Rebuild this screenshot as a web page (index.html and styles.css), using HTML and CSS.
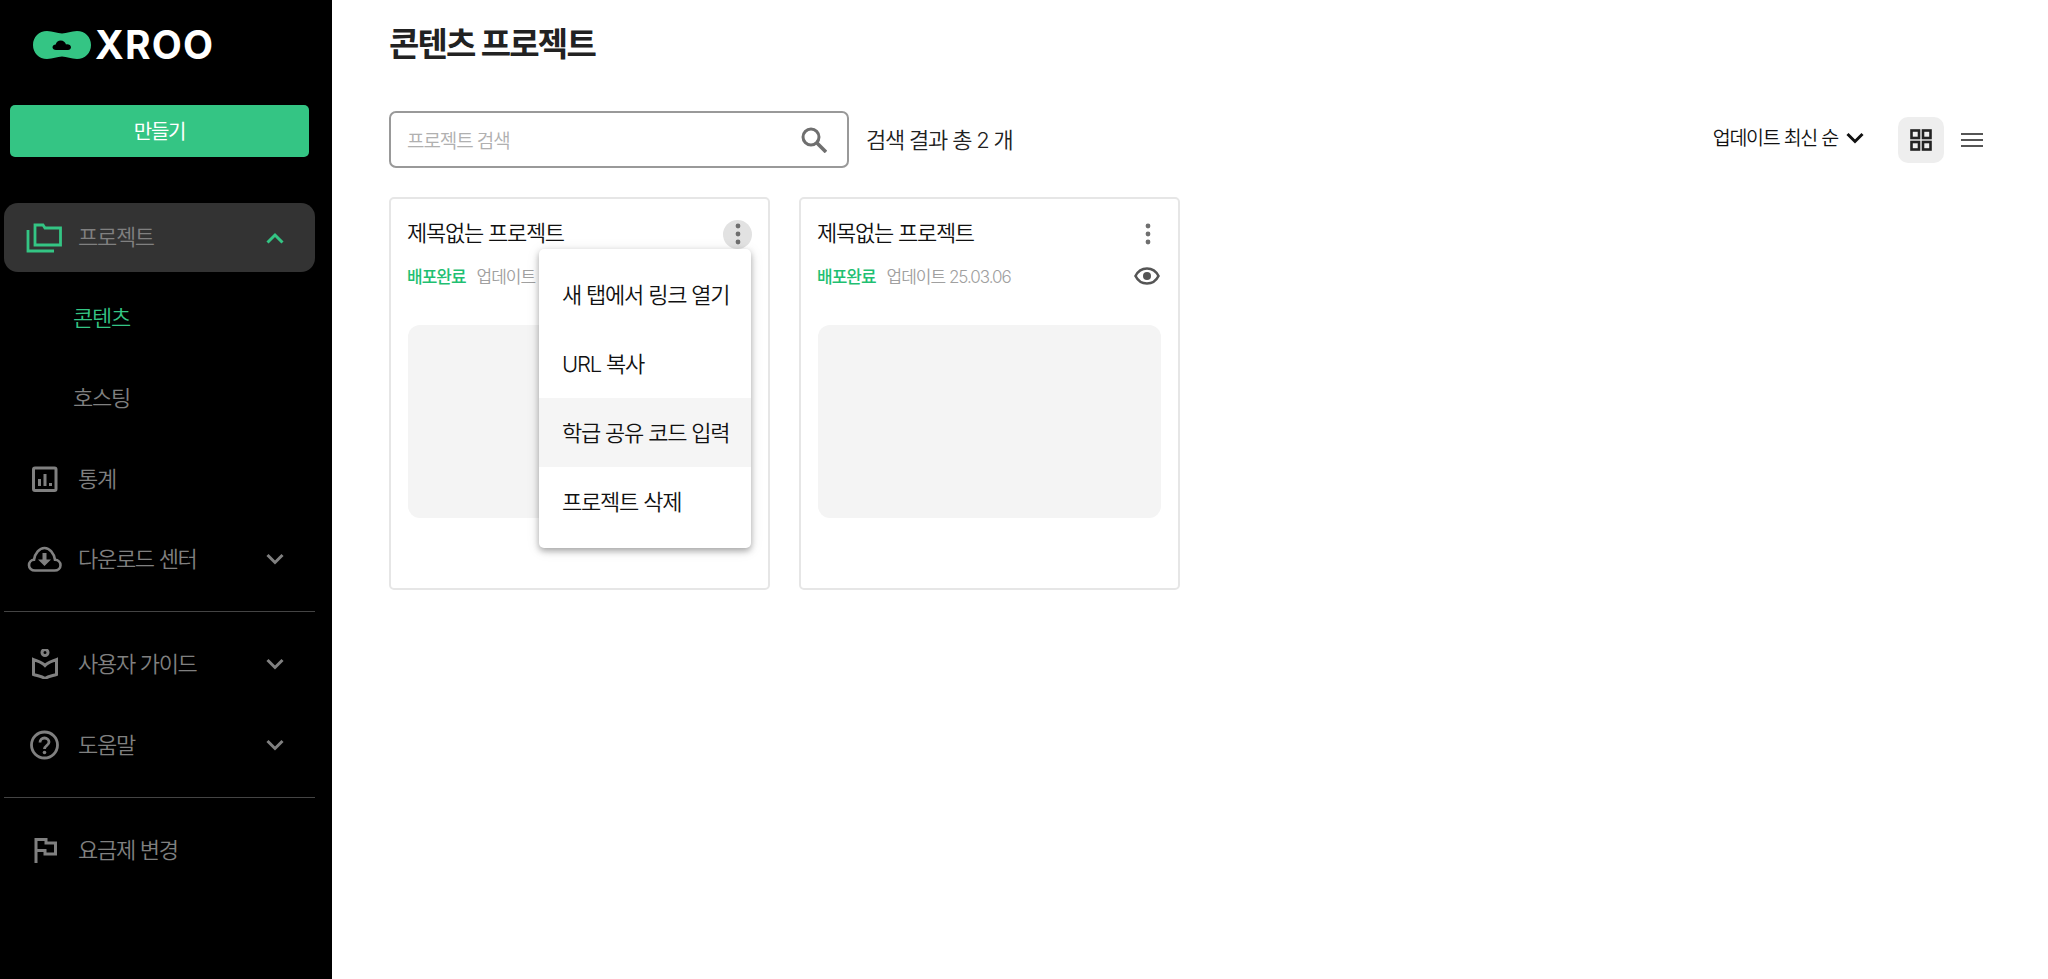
FILE: index.html
```html
<!DOCTYPE html>
<html lang="ko">
<head>
<meta charset="utf-8">
<title>XROO</title>
<link rel="stylesheet" href="styles.css">
</head>
<body>
<div class="app">
  <aside class="sidebar">
    <div class="brand">
      <svg class="brand-mark" viewBox="0 0 58 28" aria-hidden="true">
        <path fill="#34c584" d="M14 0C20 0 24 2.500 29 2.500S38 0 44 0c8 0 14 6 14 14s-6 14-14 14c-6 0-10-2.500-15-2.500S20 28 14 28C6 28 0 22 0 14S6 0 14 0Z"/>
        <path fill="#000" d="M23 19c-2 0-3.500-1.200-3.500-2.800s1.500-2.800 3.200-2.800c.6-2.200 2.600-3.900 5-3.900 2.700 0 4.800 1.700 5.300 4 2.300-.6 5 .7 5 2.800 0 1.600-1.400 2.700-3 2.700Z"/>
      </svg>
      <span class="brand-name">XROO</span>
    </div>
    <button class="create">만들기</button>
    <nav class="nav">
      <div class="nav-row active">
        <svg class="nav-icon" viewBox="0 0 36 30" aria-hidden="true"><g fill="none" stroke="#34c584" stroke-width="2.800"><path d="M9 5V2h8l2 3h15.500v17H9Z"/><path d="M2 7v21h26"/></g></svg>
        <span class="nav-label">프로젝트</span>
        <svg class="chev" viewBox="0 0 18 12" aria-hidden="true"><path d="M1.500 10.500L9 3l7.500 7.500" fill="none" stroke="#34c584" stroke-width="3"/></svg>
      </div>
      <div class="nav-sub current"><span>콘텐츠</span></div>
      <div class="nav-sub"><span>호스팅</span></div>
      <div class="nav-row">
        <svg class="nav-icon" viewBox="0 0 36 30" aria-hidden="true"><g fill="none" stroke="#808080" stroke-width="3"><rect x="7.500" y="4" width="22.500" height="22.500" rx="1.500"/><path d="M13.500 22v-7M19 22V10M24.500 22v-3"/></g></svg>
        <span class="nav-label">통계</span>
      </div>
      <div class="nav-row">
        <svg class="nav-icon" viewBox="0 0 36 30" aria-hidden="true"><path fill="none" stroke="#808080" stroke-width="2.600" d="M9 26.500c-3.500 0-6-2.300-6-5.300 0-3 2.300-5.200 5-5.400C9 9 13.500 4 18.500 4s9.500 5 10.500 11.800c3 .2 5.500 2.400 5.500 5.400 0 3-2.500 5.300-6 5.300Z"/><path fill="#808080" d="M16.500 9h4v6.500h4.500l-6.500 6.500-6.500-6.500h4.500Z"/></svg>
        <span class="nav-label">다운로드 센터</span>
        <svg class="chev" viewBox="0 0 18 12" aria-hidden="true"><path d="M1.500 2l7.500 7.500L16.500 2" fill="none" stroke="#808080" stroke-width="3"/></svg>
      </div>
      <hr class="nav-rule">
      <div class="nav-row">
        <svg class="nav-icon" viewBox="0 0 36 30" aria-hidden="true"><g fill="none" stroke="#808080" stroke-width="3"><circle cx="19" cy="3.500" r="3"/><path d="M7.500 10.500c4.500 2 9 3 11.500 6 2.500-3 7-4 11.500-6v15c-5 1.500-8.500 2-11.500 4-3-2-6.500-2.500-11.500-4Z"/></g></svg>
        <span class="nav-label">사용자 가이드</span>
        <svg class="chev" viewBox="0 0 18 12" aria-hidden="true"><path d="M1.500 2l7.500 7.500L16.500 2" fill="none" stroke="#808080" stroke-width="3"/></svg>
      </div>
      <div class="nav-row">
        <svg class="nav-icon" viewBox="0 0 36 30" aria-hidden="true"><circle cx="18.500" cy="15" r="13" fill="none" stroke="#808080" stroke-width="2.800"/><path d="M14 12.500c0-2.500 2-4.500 4.500-4.500s4.500 1.800 4.500 4c0 3.500-4.500 3.500-4.500 7" fill="none" stroke="#808080" stroke-width="2.800"/><circle cx="18.500" cy="22.500" r="1.800" fill="#808080"/></svg>
        <span class="nav-label">도움말</span>
        <svg class="chev" viewBox="0 0 18 12" aria-hidden="true"><path d="M1.500 2l7.500 7.500L16.500 2" fill="none" stroke="#808080" stroke-width="3"/></svg>
      </div>
      <hr class="nav-rule">
      <div class="nav-row">
        <svg class="nav-icon" viewBox="0 0 36 30" aria-hidden="true"><path fill="none" stroke="#808080" stroke-width="3" d="M10 28V4.500h10V8h9.500v11H19v-3.500h-9"/></svg>
        <span class="nav-label">요금제 변경</span>
      </div>
    </nav>
  </aside>
  <main class="main">
    <h1 class="title">콘텐츠 프로젝트</h1>
    <div class="toolbar">
      <div class="search">
        <span class="placeholder">프로젝트 검색</span>
        <svg class="search-icon" viewBox="0 0 26 26" aria-hidden="true"><circle cx="10" cy="10" r="8" fill="none" stroke="#6f6f6f" stroke-width="3"/><path d="M15.500 15.500L25 25" stroke="#6f6f6f" stroke-width="3.600" fill="none"/></svg>
      </div>
      <span class="result">검색 결과 총 2 개</span>
      <div class="sort">
        <span class="sort-label">업데이트 최신 순</span>
        <svg class="sort-chev" viewBox="0 0 18 12" aria-hidden="true"><path d="M1.500 2l7.500 7.500L16.500 2" fill="none" stroke="#111" stroke-width="3"/></svg>
      </div>
      <div class="view-btn on">
        <svg viewBox="0 0 22 22" aria-hidden="true"><g fill="none" stroke="#222" stroke-width="2.600"><rect x="1.500" y="1.500" width="7.500" height="7.500"/><rect x="13" y="1.500" width="7.500" height="7.500"/><rect x="1.500" y="13" width="7.500" height="7.500"/><rect x="13" y="13" width="7.500" height="7.500"/></g></svg>
      </div>
      <div class="view-btn">
        <svg viewBox="0 0 22 22" aria-hidden="true"><path d="M0 5h22M0 11h22M0 17h22" stroke="#555" stroke-width="2.200"/></svg>
      </div>
    </div>
    <div class="cards">
      <article class="card">
        <div class="card-head">
          <span class="card-title">제목없는 프로젝트</span>
          <span class="kebab open"><svg viewBox="0 0 6 22" aria-hidden="true"><g fill="#6f6f6f"><circle cx="3" cy="3" r="2.400"/><circle cx="3" cy="11" r="2.400"/><circle cx="3" cy="19" r="2.400"/></g></svg></span>
        </div>
        <div class="card-meta"><span class="status">배포완료</span><span class="updated">업데이트 25.03.06</span></div>
        <div class="thumb"></div>
        <ul class="menu">
          <li><span>새 탭에서 링크 열기</span></li>
          <li><span>URL 복사</span></li>
          <li class="hover"><span>학급 공유 코드 입력</span></li>
          <li><span>프로젝트 삭제</span></li>
        </ul>
      </article>
      <article class="card">
        <div class="card-head">
          <span class="card-title">제목없는 프로젝트</span>
          <span class="kebab"><svg viewBox="0 0 6 22" aria-hidden="true"><g fill="#6f6f6f"><circle cx="3" cy="3" r="2.400"/><circle cx="3" cy="11" r="2.400"/><circle cx="3" cy="19" r="2.400"/></g></svg></span>
        </div>
        <div class="card-meta"><span class="status">배포완료</span><span class="updated">업데이트 25.03.06</span>
          <svg class="eye" viewBox="0 0 26 18" aria-hidden="true"><path d="M1.500 9C4 4 8 1.500 13 1.500S22 4 24.500 9C22 14 18 16.500 13 16.500S4 14 1.500 9Z" fill="none" stroke="#555" stroke-width="2.600"/><circle cx="13" cy="9" r="4" fill="#555"/></svg>
        </div>
        <div class="thumb"></div>
      </article>
    </div>
  </main>
</div>
</body>
</html>
```
FILE: styles.css
```css
* { box-sizing: border-box; }
html, body { margin: 0; height: 100%; overflow: hidden; }
body {
  background: #fff;
  color: #111;
  font-family: Inter, "Noto Sans CJK KR", sans-serif;
  font-weight: 350;
}
.app { display: flex; height: 979px; }

.sidebar {
  width: 332px;
  flex: none;
  background: #000;
  padding: 31px 17px 0 4px;
  display: flex;
  flex-direction: column;
}
.brand { display: flex; align-items: center; height: 28px; padding-left: 29px; gap: 4px; }
.brand-mark { width: 58px; height: 28px; flex: none; }
.brand-name {
  font-family: Inter, sans-serif;
  font-weight: 700;
  font-size: 39px;
  line-height: 28px;
  color: #fff;
  letter-spacing: 1.2px;
}
.create {
  margin: 46px 0 0 6px;
  width: 299px;
  height: 52px;
  padding: 0 0 2px;
  border: 0;
  border-radius: 5px;
  background: #34c584;
  color: #fff;
  font: 400 20px Inter, "Noto Sans CJK KR", sans-serif;
  letter-spacing: -1.200px;
}
.nav { margin-top: 46px; display: flex; flex-direction: column; gap: 12px; }
.nav-row, .nav-sub {
  height: 68.3px;
  display: flex;
  align-items: center;
  font-size: 22px;
  letter-spacing: -1.3px;
  color: #808080;
}
.nav-row { padding: 0 31px 0 22px; border-radius: 14px; }
.nav-row.active { background: #333; height: 69px; }
.nav-row.active .nav-label { padding-bottom: 6px; }
.nav-icon { width: 36px; height: 30px; flex: none; }
.nav-label { margin-left: 16px; flex: 1; padding-bottom: 4px; }
.chev { width: 18px; height: 12px; flex: none; }
.nav-sub { padding: 0 0 4px 69px; }
.nav-sub.current { color: #34c584; }
.nav-rule { width: 100%; margin: 6px 0; border: 0; border-top: 1px solid #444; height: 0; }

.main { flex: 1; padding: 22px 53px 0 57px; min-width: 0; }
.title {
  margin: 0;
  font-size: 33px;
  line-height: 44px;
  font-weight: 700;
  letter-spacing: -1.8px;
  color: #222;
}
.toolbar { margin-top: 45px; height: 57px; display: flex; align-items: center; }
.search {
  width: 460px;
  height: 57px;
  flex: none;
  border: 2px solid #999;
  border-radius: 7px;
  padding: 0 20px 0 16px;
  display: flex;
  align-items: center;
  justify-content: space-between;
}
.placeholder { font-size: 19px; letter-spacing: -1.1px; color: #b0b0b0; }
.search-icon { width: 26px; height: 26px; }
.result { margin-left: 17px; padding-bottom: 3px; font-size: 22px; letter-spacing: -1.2px; color: #222; flex: 1; }
.sort { display: flex; align-items: center; gap: 8px; font-size: 19.5px; letter-spacing: -1.25px; color: #111; margin: -3px 34px 0 0; }
.sort-label { padding-bottom: 3px; }
.sort-chev { width: 18px; height: 12px; }
.view-btn { width: 46px; height: 46px; display: flex; align-items: center; justify-content: center; border-radius: 10px; }
.view-btn.on { background: #eee; margin-right: 5px; }
.view-btn svg { width: 22px; height: 22px; }

.cards { margin-top: 29px; display: flex; gap: 29px; }
.card {
  position: relative;
  width: 381px;
  height: 393px;
  border: 2px solid #e6e6e6;
  border-radius: 5px;
  padding: 0 16px;
}
.card-head { margin-top: 18px; height: 34px; display: flex; align-items: center; justify-content: space-between; }
.card-title { padding-bottom: 6px; font-size: 22px; letter-spacing: -1.25px; color: #111; }
.kebab { width: 29px; height: 29px; border-radius: 50%; display: flex; align-items: center; justify-content: center; }
.kebab.open { background: #e2e2e2; }
.kebab svg { width: 6px; height: 22px; }
.card-meta { margin-top: 10px; height: 30px; display: flex; align-items: center; position: relative; padding-bottom: 2px; }
.status { font-size: 17px; font-weight: 500; letter-spacing: -1px; color: #1fc072; }
.updated { margin-left: 11px; font-size: 17px; letter-spacing: -1px; color: #a0a0a0; }
.eye { position: absolute; right: 2px; top: 6px; width: 26px; height: 18px; }
.thumb { margin: 34px 0 0 1px; width: 343px; height: 193px; background: #f4f4f4; border-radius: 12px; }
.menu {
  position: absolute;
  left: 148px;
  top: 50px;
  width: 212px;
  margin: 0;
  padding: 11px 0 12px;
  list-style: none;
  background: #fff;
  border-radius: 5px;
  box-shadow: 0 3px 6px rgba(0,0,0,.3), 0 2px 14px rgba(0,0,0,.1);
}
.menu li {
  height: 69px;
  padding: 0 0 4px 23px;
  display: flex;
  align-items: center;
  font-size: 22px;
  letter-spacing: -1.2px;
  color: #111;
  white-space: nowrap;
}
.menu li.hover { background: #f5f5f5; }
```
